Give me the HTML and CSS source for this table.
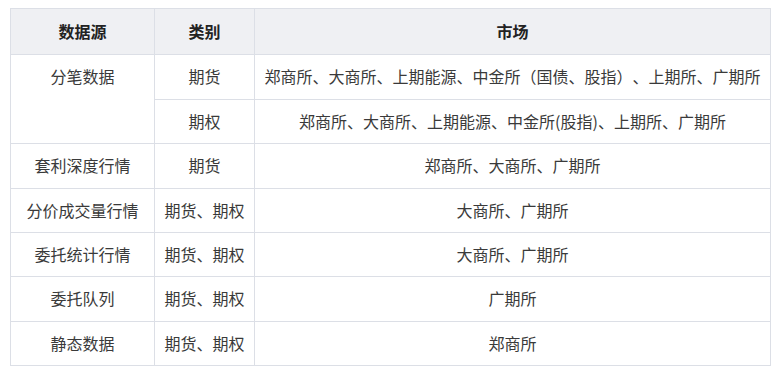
FILE: index.html
```html
<!DOCTYPE html>
<html lang="zh-CN">

<head>
    <meta charset="UTF-8">
    <meta name="viewport" content="width=device-width, initial-scale=1.0">
    <title>行情数据</title>

    <link rel="stylesheet" href="styles.css">
</head>

<body>
    <table class="market">
        <colgroup>
            <col class="col-source">
            <col class="col-type">
            <col class="col-market">
        </colgroup>
        <thead>
            <tr>
                <th>数据源</th>
                <th>类别</th>
                <th>市场</th>
            </tr>
        </thead>
        <tbody>
            <tr>
                <td rowspan="2">分笔数据</td>
                <td>期货</td>
                <td>郑商所、大商所、上期能源、中金所（国债、股指）、上期所、广期所</td>
            </tr>
            <tr>
                <td>期权</td>
                <td>郑商所、大商所、上期能源、中金所(股指)、上期所、广期所</td>
            </tr>
            <tr>
                <td>套利深度行情</td>
                <td>期货</td>
                <td>郑商所、大商所、广期所</td>
            </tr>
            <tr>
                <td>分价成交量行情</td>
                <td>期货、期权</td>
                <td>大商所、广期所</td>
            </tr>
            <tr>
                <td>委托统计行情</td>
                <td>期货、期权</td>
                <td>大商所、广期所</td>
            </tr>
            <tr>
                <td>委托队列</td>
                <td>期货、期权</td>
                <td>广期所</td>
            </tr>
            <tr>
                <td>静态数据</td>
                <td>期货、期权</td>
                <td>郑商所</td>
            </tr>
        </tbody>
    </table>
</body>

</html>
```

FILE: styles.css
```css
* {
    padding: 0;
    margin: 0;
}

body {
    background-color: #fff;
    font-family: "Microsoft YaHei", "Noto Sans CJK SC", sans-serif;
    font-size: 16px;
    color: #333;
    text-spacing-trim: space-all;
}

.market {
    margin: 8px 0 0 10px;
    width: 760px;
    border-collapse: collapse;
    table-layout: fixed;
}

.col-source {
    width: 144px;
}

.col-type {
    width: 100px;
}

.col-market {
    width: 516px;
}

.market th,
.market td {
    border: 1px solid #dcdfe6;
    text-align: center;
    vertical-align: top;
    line-height: 23.4px;
    padding: 10px 4px;
    white-space: nowrap;
}

.market th {
    background-color: #eff0f3;
    font-weight: bold;
    color: #222;
    padding: 11px 4px;
}

.market td {
    color: #3a3a3a;
}
```
